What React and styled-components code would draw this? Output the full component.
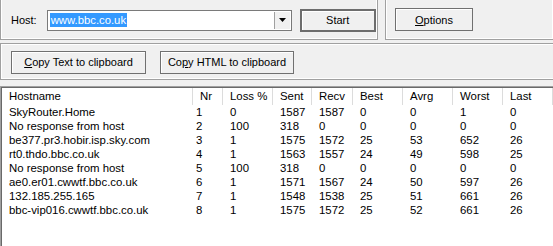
import React from "react";
import styled, { createGlobalStyle } from "styled-components";

const GlobalStyle = createGlobalStyle`
  html, body {
    margin: 0;
    padding: 0;
    background: #f0f0f0;
    overflow: hidden;
  }
  body {
    font-family: "Liberation Sans", Arial, sans-serif;
    font-size: 11px;
    color: #000;
  }
`;

const columns = [
  { key: "host", title: "Hostname", width: 192 },
  { key: "nr", title: "Nr", width: 30 },
  { key: "loss", title: "Loss %", width: 50 },
  { key: "sent", title: "Sent", width: 39 },
  { key: "recv", title: "Recv", width: 41 },
  { key: "best", title: "Best", width: 50 },
  { key: "avrg", title: "Avrg", width: 50 },
  { key: "worst", title: "Worst", width: 50 },
  { key: "last", title: "Last", width: 50 },
];

const rows = [
  ["SkyRouter.Home", 1, 0, 1587, 1587, 0, 0, 1, 0],
  ["No response from host", 2, 100, 318, 0, 0, 0, 0, 0],
  ["be377.pr3.hobir.isp.sky.com", 3, 1, 1575, 1572, 25, 53, 652, 26],
  ["rt0.thdo.bbc.co.uk", 4, 1, 1563, 1557, 24, 49, 598, 25],
  ["No response from host", 5, 100, 318, 0, 0, 0, 0, 0],
  ["ae0.er01.cwwtf.bbc.co.uk", 6, 1, 1571, 1567, 24, 50, 597, 26],
  ["132.185.255.165", 7, 1, 1548, 1538, 25, 51, 661, 26],
  ["bbc-vip016.cwwtf.bbc.co.uk", 8, 1, 1575, 1572, 25, 52, 661, 26],
];

const App = () => (
  <Window>
    <GlobalStyle />
    <TopRow>
      <Panel $width="378px">
        <HostLabel>Host:</HostLabel>
        <Combo>
          <ComboText>
            <Selected>www.bbc.co.uk</Selected>
          </ComboText>
          <DropButton>
            <svg width="7" height="4" viewBox="0 0 7 4">
              <path d="M0 0h7L3.5 4z" fill="#000" />
            </svg>
          </DropButton>
        </Combo>
        <Button $default $width="76px" $left="8px">
          Start
        </Button>
      </Panel>
      <Panel $grow>
        <Button $width="78px" $left="9px" $top="-1px">
          <u>O</u>ptions
        </Button>
      </Panel>
    </TopRow>
    <CopyPanel>
      <Button $width="135px" $left="10px">
        <u>C</u>opy Text to clipboard
      </Button>
      <Button $width="134px" $left="14px">
        Co<u>p</u>y HTML to clipboard
      </Button>
    </CopyPanel>
    <List>
      <HeaderRow>
        {columns.map((c) => (
          <HeaderCell key={c.key} $width={c.width}>
            {c.title}
          </HeaderCell>
        ))}
      </HeaderRow>
      {rows.map((r, i) => (
        <Row key={i}>
          {r.map((v, j) => (
            <Cell key={j} $width={columns[j].width} $nr={j === 1}>
              {v}
            </Cell>
          ))}
        </Row>
      ))}
    </List>
  </Window>
);

export default App;

// style
const Window = styled.div`
  width: 553px;
  height: 246px;
  display: flex;
  flex-direction: column;
  overflow: hidden;
`;
const TopRow = styled.div`
  display: flex;
  gap: 7px;
  height: 40px;
`;
const Panel = styled.div`
  box-sizing: border-box;
  width: ${(p) => p.$width || "auto"};
  flex: ${(p) => (p.$grow ? "1" : "none")};
  display: flex;
  align-items: center;
  padding-top: 1px;
  border: 1px solid #a0a0a0;
  border-top: none;
  box-shadow: inset 1px 0 #fff, inset -1px -1px #fff;
  ${(p) => (p.$grow ? "border-right: none;" : "")}
`;
const HostLabel = styled.span`
  margin-left: 10px;
  margin-right: 10px;
`;
const Combo = styled.div`
  box-sizing: border-box;
  width: 245px;
  height: 21px;
  display: flex;
  align-items: stretch;
  background: #fff;
  border: 1px solid #7a7a7a;
  padding: 1px;
`;
const ComboText = styled.div`
  flex: 1;
  display: flex;
  align-items: center;
  padding-left: 1px;
`;
const Selected = styled.span`
  background: #3399ff;
  color: #fff;
  line-height: 14px;
  padding: 0 1px;
  font-size: 11.3px;
`;
const DropButton = styled.div`
  width: 15px;
  display: flex;
  align-items: center;
  justify-content: center;
  background: #f0f0f0;
  border-left: 1px solid #a0a0a0;
`;
const Button = styled.div`
  box-sizing: border-box;
  width: ${(p) => p.$width};
  height: 23px;
  margin-left: ${(p) => p.$left || "0"};
  margin-top: ${(p) => p.$top || "0"};
  display: flex;
  align-items: center;
  justify-content: center;
  background: #f0f0f0;
  border: ${(p) => (p.$default ? "2px solid #6d6d6d" : "1px solid #707070")};
  box-shadow: inset 1px 1px #fff;
  white-space: nowrap;
`;
const CopyPanel = styled.div`
  box-sizing: border-box;
  height: 37px;
  margin-top: 3px;
  display: flex;
  align-items: center;
  padding-top: 1px;
  border: 1px solid #a0a0a0;
  border-right: none;
  box-shadow: inset 1px 1px #fff, inset 0 -1px #fff;
`;
const List = styled.div`
  box-sizing: border-box;
  flex: 1;
  margin-top: 6px;
  background: #fff;
  border-top: 1px solid #a0a0a0;
  border-left: 1px solid #a0a0a0;
  box-shadow: inset 1px 1px #696969;
  padding: 1px 0 0 1px;
  font-size: 11.4px;
`;
const HeaderRow = styled.div`
  display: flex;
  height: 17px;
  margin-bottom: 0;
`;
const HeaderCell = styled.div`
  box-sizing: border-box;
  width: ${(p) => p.$width - (p.$width === 192 ? 1 : 0)}px;
  flex: none;
  padding-left: 7px;
  line-height: 17px;
  border-right: 1px solid #dcdcdc;
`;
const Row = styled.div`
  display: flex;
  height: 14px;
`;
const Cell = styled.div`
  box-sizing: border-box;
  width: ${(p) => p.$width - (p.$width === 192 ? 1 : 0)}px;
  flex: none;
  padding-left: ${(p) => (p.$nr ? "3px" : "7px")};
  line-height: 14px;
  white-space: nowrap;
`;
